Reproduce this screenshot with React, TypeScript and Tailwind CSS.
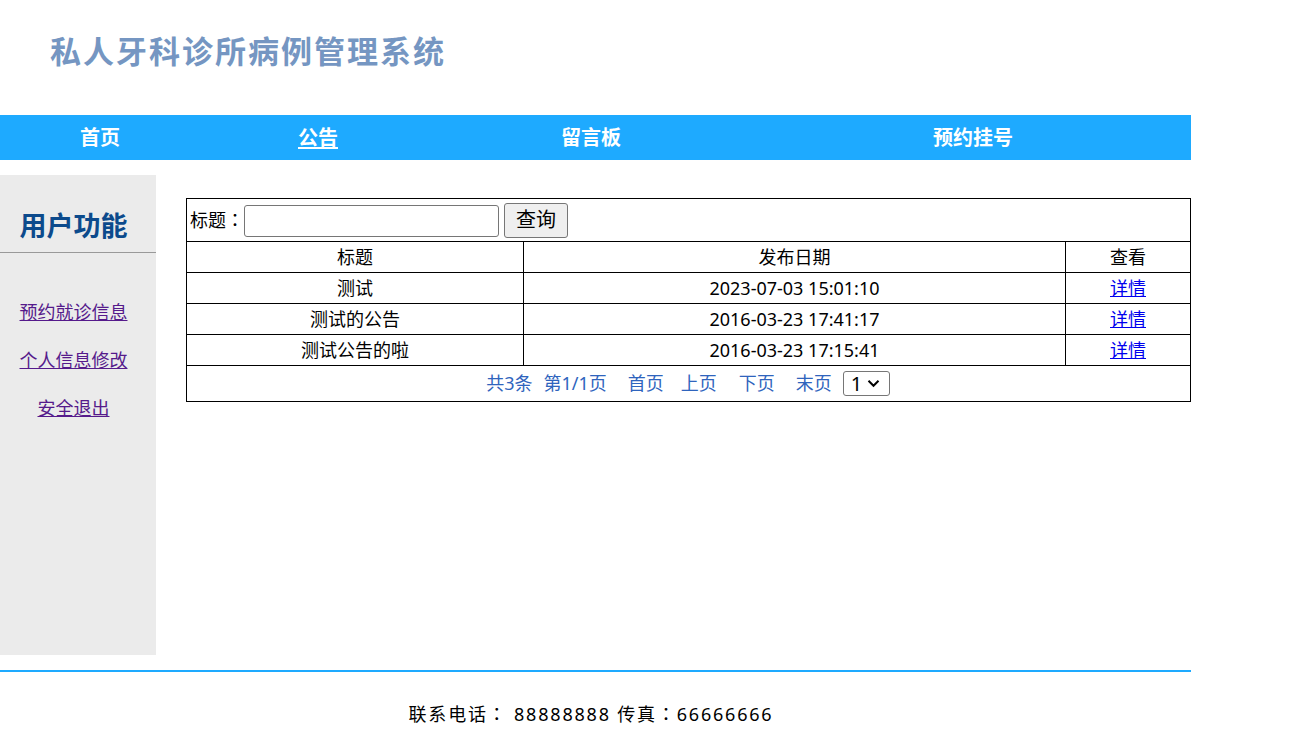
import React from 'react';

const rows = [
  { title: '测试', date: '2023-07-03 15:01:10' },
  { title: '测试的公告', date: '2016-03-23 17:41:17' },
  { title: '测试公告的啦', date: '2016-03-23 17:15:41' },
];

// centered full-width colon, as in the original page
const Colon = () => <span style={{ fontFamily: '"Noto Sans CJK TC", sans-serif' }}>：</span>;

export default function App() {
  return (
    <div
      className="w-[1313px] h-[730px] overflow-hidden bg-white text-black"
      style={{ fontFamily: '"Noto Sans", "Noto Sans CJK SC", sans-serif' }}
    >
      <div className="w-[1191px]">
        {/* header */}
        <div className="h-[115px] flex items-center pl-[50px] pb-[14px]">
          <h1
            className="text-[31px] font-bold tracking-[2px] text-[#7596c2]"
            style={{ fontFamily: '"Noto Sans CJK SC", serif' }}
          >
            私人牙科诊所病例管理系统
          </h1>
        </div>

        {/* nav */}
        <div className="h-[45px] bg-[#1eaaff] flex items-center text-white text-[20px] font-bold">
          <a className="w-[200px] text-center" href="#">首页</a>
          <a className="w-[236px] text-center underline underline-offset-[2px]" href="#">公告</a>
          <a className="w-[310px] text-center" href="#">留言板</a>
          <a className="flex-1 text-center pl-[9px]" href="#">预约挂号</a>
        </div>

        {/* body */}
        <div className="flex mt-[15px]">
          <div className="w-[156px] h-[480px] bg-[#ebebeb] shrink-0">
            <div className="h-[78px] flex items-end justify-center border-b border-[#999] pb-[6px]">
              <span className="text-[27px] font-bold text-[#0c4a8c] -ml-[9px]">用户功能</span>
            </div>
            <div className="flex flex-col items-center pt-[47px] gap-[24px] text-[18px] text-[#551a8b] -ml-[9px]">
              <a className="underline leading-6" href="#">预约就诊信息</a>
              <a className="underline leading-6" href="#">个人信息修改</a>
              <a className="underline leading-6" href="#">安全退出</a>
            </div>
          </div>

          <div className="ml-[30px] mt-[23px] w-[1005px]">
            <table className="w-full border-collapse border border-black text-[18px]">
              <tbody>
                <tr className="h-[43px]">
                  <td colSpan={3} className="border border-black px-[3px]">
                    <div className="flex items-center">
                      <span>标题<Colon /></span>
                      <input
                        className="w-[255px] h-[32px] border border-[#767676] rounded-[3px] mt-[1px]"
                        type="text"
                      />
                      <button className="ml-[5px] w-[64px] h-[35px] border border-[#767676] rounded-[3px] bg-[#efefef] text-[20px]">
                        查询
                      </button>
                    </div>
                  </td>
                </tr>
                <tr className="h-[31px] text-center">
                  <td className="border border-black w-[337px]">标题</td>
                  <td className="border border-black w-[542px]">发布日期</td>
                  <td className="border border-black">查看</td>
                </tr>
                {rows.map((r) => (
                  <tr key={r.date} className="h-[31px] text-center">
                    <td className="border border-black">{r.title}</td>
                    <td className="border border-black">{r.date}</td>
                    <td className="border border-black">
                      <a className="text-[#0000ee] underline" href="#">详情</a>
                    </td>
                  </tr>
                ))}
                <tr className="h-[36px]">
                  <td colSpan={3} className="border border-black">
                    <div className="flex items-center justify-center text-[#2f64bd] -ml-[1px]">
                      <span>共3条</span>
                      <span className="ml-[11px]">第1/1页</span>
                      <span className="ml-[21px]">首页</span>
                      <span className="ml-[17px]">上页</span>
                      <span className="ml-[22px]">下页</span>
                      <span className="ml-[21px]">末页</span>
                      <div className="ml-[11px] w-[47px] h-[25px] border border-[#767676] rounded-[3px] flex items-center pl-[7px] text-black text-[20px]">
                        <span>1</span>
                        <svg className="ml-[5px]" width="13" height="9" viewBox="0 0 13 9" fill="none">
                          <path d="M1.5 1.8 L6.5 6.8 L11.5 1.8" stroke="#000" strokeWidth="2" />
                        </svg>
                      </div>
                    </div>
                  </td>
                </tr>
              </tbody>
            </table>
          </div>
        </div>

        {/* footer */}
        <div className="mt-[15px] border-t-2 border-[#1eaaff] pt-[28px] pr-[9px] text-center text-[18px] tracking-[1.8px]">
          联系电话<Colon /> 88888888 传真<Colon />66666666
        </div>
      </div>
    </div>
  );
}
